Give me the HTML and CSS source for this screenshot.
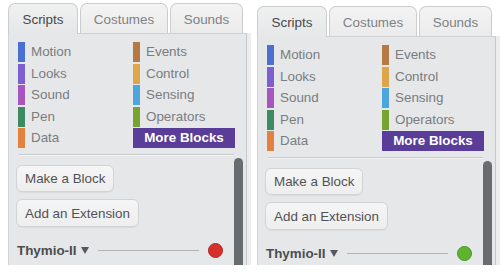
FILE: index.html
```html
<!DOCTYPE html>
<html>
<head>
<meta charset="utf-8">
<link rel="stylesheet" href="styles.css">
</head>
<body>
<div class="page">
  <section class="panel">
    <div class="tabs">
      <div class="tab tab--active">Scripts</div>
      <div class="tab">Costumes</div>
      <div class="tab">Sounds</div>
    </div>
    <div class="body">
      <div class="cats">
        <div class="cat"><span class="swatch motion"></span>Motion</div>
        <div class="cat"><span class="swatch looks"></span>Looks</div>
        <div class="cat"><span class="swatch sound"></span>Sound</div>
        <div class="cat"><span class="swatch pen"></span>Pen</div>
        <div class="cat"><span class="swatch data"></span>Data</div>
        <div class="cat"><span class="swatch events"></span>Events</div>
        <div class="cat"><span class="swatch control"></span>Control</div>
        <div class="cat"><span class="swatch sensing"></span>Sensing</div>
        <div class="cat"><span class="swatch operators"></span>Operators</div>
        <div class="cat cat--more">More Blocks</div>
      </div>
      <div class="sep"></div>
      <div class="scroll">
        <div class="content">
          <button class="btn">Make a Block</button>
          <button class="btn">Add an Extension</button>
          <div class="ext">
            <span class="ext-name">Thymio-II</span>
            <span class="caret"></span>
            <span class="ext-line"></span>
            <span class="status status--off"></span>
          </div>
        </div>
        <div class="scrollbar"></div>
      </div>
    </div>
  </section>
  <section class="panel panel--second">
    <div class="tabs">
      <div class="tab tab--active">Scripts</div>
      <div class="tab">Costumes</div>
      <div class="tab">Sounds</div>
    </div>
    <div class="body">
      <div class="cats">
        <div class="cat"><span class="swatch motion"></span>Motion</div>
        <div class="cat"><span class="swatch looks"></span>Looks</div>
        <div class="cat"><span class="swatch sound"></span>Sound</div>
        <div class="cat"><span class="swatch pen"></span>Pen</div>
        <div class="cat"><span class="swatch data"></span>Data</div>
        <div class="cat"><span class="swatch events"></span>Events</div>
        <div class="cat"><span class="swatch control"></span>Control</div>
        <div class="cat"><span class="swatch sensing"></span>Sensing</div>
        <div class="cat"><span class="swatch operators"></span>Operators</div>
        <div class="cat cat--more">More Blocks</div>
      </div>
      <div class="sep"></div>
      <div class="scroll">
        <div class="content">
          <button class="btn">Make a Block</button>
          <button class="btn">Add an Extension</button>
          <div class="ext">
            <span class="ext-name">Thymio-II</span>
            <span class="caret"></span>
            <span class="ext-line"></span>
            <span class="status status--on"></span>
          </div>
        </div>
        <div class="scrollbar"></div>
      </div>
    </div>
  </section>
</div>
</body>
</html>
```

FILE: styles.css
```css
* { box-sizing: border-box; }
html, body { margin: 0; padding: 0; background: #ffffff; }
body {
  font-family: "Liberation Sans", Arial, sans-serif;
  font-size: 13.4px;
  width: 500px;
  height: 272px;
  overflow: hidden;
}
.page {
  display: flex;
  align-items: stretch;
  gap: 6px;
  height: 265px;
  padding: 3px 0 0 8px;
}
.panel {
  width: 243px;
  display: flex;
  flex-direction: column;
}
.panel--second { margin-top: 3px; }

.tabs {
  display: flex;
  gap: 2px;
  height: 30px;
  position: relative;
  z-index: 1;
}
.tab {
  height: 30px;
  padding: 0 14px;
  display: flex;
  align-items: center;
  justify-content: center;
  border: 1px solid #cbcccd;
  border-bottom: none;
  border-radius: 7px 7px 0 0;
  background: linear-gradient(#f3f3f3, #ebebeb);
  color: #7f8184;
  padding-top: 1px;
}
.tab:nth-child(1) { width: 70px; }
.tab:nth-child(2) { width: 88px; }
.tab:nth-child(3) { width: 73px; }
.tab--active {
  background: linear-gradient(#eff0f0, #e6e7e8);
  color: #45484b;
  height: 31px;
  margin-bottom: -1px;
}

.body {
  flex: 1;
  display: flex;
  flex-direction: column;
  background: #e6e7e8;
  border-top: 1px solid #cfd0d1;
  border-left: 1px solid #d3d4d5;
  border-right: 1px solid #c6c7c8;
  width: 239px;
  padding: 8px 0 0 9px;
  overflow: hidden;
  box-shadow: 4px 0 0 #ededee;
}

.cats {
  display: grid;
  grid-auto-flow: column;
  grid-template-columns: 115px 102px;
  grid-template-rows: repeat(5, 20px);
  row-gap: 1.5px;
}
.cat {
  display: flex;
  align-items: center;
  color: #7a7d80;
  line-height: 20px;
}
.swatch {
  width: 7px;
  height: 20px;
  margin-right: 6px;
  flex: none;
}
.motion { background: #4a70d2; }
.looks { background: #7d5fd2; }
.sound { background: #a856bf; }
.pen { background: #3e8a62; }
.data { background: #e3823e; }
.events { background: #b67943; }
.control { background: #dea54a; }
.sensing { background: #4ca6de; }
.operators { background: #76a332; }
.cat--more {
  background: #5a3d98;
  color: #ffffff;
  font-weight: bold;
  justify-content: center;
}

.sep {
  margin: 6px 0 0 1px;
  width: 215px;
  height: 2px;
  border-top: 1px solid #c9cacb;
  border-bottom: 1px solid #f3f3f3;
}

.scroll {
  flex: 1;
  display: flex;
  margin-top: 2px;
  margin-left: -2px;
}
.content {
  flex: 1;
  display: flex;
  flex-direction: column;
  align-items: flex-start;
  padding: 7px 11px 0 0;
  gap: 7px;
}
.btn {
  font-family: "Liberation Sans", Arial, sans-serif;
  font-size: 13.4px;
  color: #505356;
  background: linear-gradient(#f5f5f5, #eeeeee);
  border: 1px solid #d2d3d4;
  border-radius: 6px;
  height: 27px;
  padding: 0 8px;
  margin: 0;
  box-shadow: 0 1px 0 rgba(0,0,0,0.04);
}
.btn + .btn { height: 28px; }

.ext {
  display: flex;
  align-items: center;
  align-self: stretch;
  height: 16px;
  margin-top: 8px;
  padding-left: 1px;
}
.ext-name {
  font-weight: bold;
  color: #4a4e52;
}
.caret {
  width: 0;
  height: 0;
  margin-left: 4px;
  border-left: 4.5px solid transparent;
  border-right: 4.5px solid transparent;
  border-top: 7px solid #55595d;
}
.ext-line {
  flex: 1;
  height: 1px;
  background: #b3b4b6;
  margin: 0 9px;
}
.status {
  width: 15px;
  height: 15px;
  border-radius: 50%;
  flex: none;
}
.status--off { background: #d6302c; border: 1px solid #b02522; }
.status--on { background: #5db42e; border: 1px solid #4a9422; }

.scrollbar {
  width: 9px;
  margin-right: 3px;
  background: #696c6f;
  border-radius: 5px 5px 0 0;
}
```
